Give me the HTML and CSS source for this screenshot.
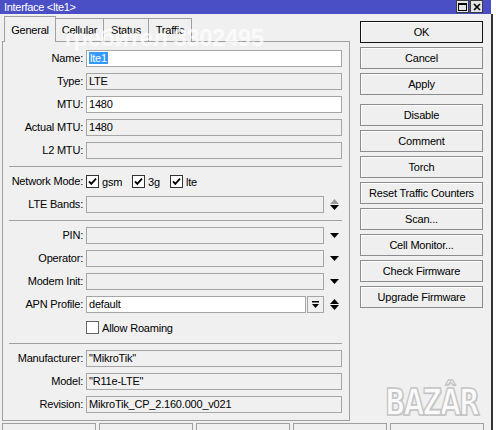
FILE: index.html
```html
<!DOCTYPE html>
<html>
<head>
<meta charset="utf-8">
<link rel="stylesheet" href="styles.css">
</head>
<body>
<div class="window">
  <div class="titlebar">
    <span class="title">Interface &lt;lte1&gt;</span>
    <div class="tb-btns">
      <span class="tb-btn"><svg width="9" height="8" viewBox="0 0 9 8"><rect x="0.5" y="0.5" width="8" height="7" fill="none" stroke="#000"/><rect x="0" y="0" width="9" height="2" fill="#000"/></svg></span>
      <span class="tb-btn"><svg width="8" height="8" viewBox="0 0 8 8"><path d="M1 1L7 7M7 1L1 7" stroke="#000" stroke-width="1.7"/></svg></span>
    </div>
  </div>
  <div class="main">
    <div class="content">
      <div class="left">
        <div class="tabs">
          <div class="tab active">General</div>
          <div class="tab t2">Cellular</div>
          <div class="tab t3">Status</div>
          <div class="tab t4">Traffic</div>
          <div class="watermark">требител 3302495</div>
        </div>
        <div class="panel">
          <div class="row"><div class="lbl">Name:</div><div class="field edit"><span class="sel">lte1</span></div></div>
          <div class="row"><div class="lbl">Type:</div><div class="field">LTE</div></div>
          <div class="row"><div class="lbl">MTU:</div><div class="field edit">1480</div></div>
          <div class="row"><div class="lbl">Actual MTU:</div><div class="field">1480</div></div>
          <div class="row"><div class="lbl">L2 MTU:</div><div class="field"></div></div>
          <div class="sep"></div>
          <div class="row"><div class="lbl">Network Mode:</div>
            <div class="val checks">
              <div class="cbi w46"><span class="cb"><svg width="11" height="11" viewBox="0 0 11 11"><path d="M2 5.3L4.3 7.8L9 2.6" fill="none" stroke="#000" stroke-width="1.8"/></svg></span><span>gsm</span></div>
              <div class="cbi w38"><span class="cb"><svg width="11" height="11" viewBox="0 0 11 11"><path d="M2 5.3L4.3 7.8L9 2.6" fill="none" stroke="#000" stroke-width="1.8"/></svg></span><span>3g</span></div>
              <div class="cbi"><span class="cb"><svg width="11" height="11" viewBox="0 0 11 11"><path d="M2 5.3L4.3 7.8L9 2.6" fill="none" stroke="#000" stroke-width="1.8"/></svg></span><span>lte</span></div>
            </div>
          </div>
          <div class="row"><div class="lbl">LTE Bands:</div>
            <div class="val"><div class="field"></div><div class="extra"><svg width="9" height="11" viewBox="0 0 9 11"><polygon points="0,5 9,5 4.5,0" fill="#9a9a9a"/><polygon points="0,6 9,6 4.5,11" fill="#000"/></svg></div></div>
          </div>
          <div class="sep"></div>
          <div class="row"><div class="lbl">PIN:</div>
            <div class="val"><div class="field"></div><div class="extra"><svg width="9" height="5" viewBox="0 0 9 5"><polygon points="0,0 9,0 4.5,5" fill="#000"/></svg></div></div>
          </div>
          <div class="row"><div class="lbl">Operator:</div>
            <div class="val"><div class="field"></div><div class="extra"><svg width="9" height="5" viewBox="0 0 9 5"><polygon points="0,0 9,0 4.5,5" fill="#000"/></svg></div></div>
          </div>
          <div class="row"><div class="lbl">Modem Init:</div>
            <div class="val"><div class="field"></div><div class="extra"><svg width="9" height="5" viewBox="0 0 9 5"><polygon points="0,0 9,0 4.5,5" fill="#000"/></svg></div></div>
          </div>
          <div class="row"><div class="lbl">APN Profile:</div>
            <div class="val"><div class="field edit">default</div><div class="mini"><svg width="7" height="7" viewBox="0 0 7 7"><rect x="0" y="0" width="7" height="1.5" fill="#000"/><polygon points="0,3 7,3 3.5,7" fill="#000"/></svg></div><div class="extra"><svg width="9" height="11" viewBox="0 0 9 11"><polygon points="0,5 9,5 4.5,0" fill="#000"/><polygon points="0,6 9,6 4.5,11" fill="#000"/></svg></div></div>
          </div>
          <div class="row"><div class="lbl"></div>
            <div class="val checks"><div class="cbi"><span class="cb light"></span><span>Allow Roaming</span></div></div>
          </div>
          <div class="sep"></div>
          <div class="row"><div class="lbl">Manufacturer:</div><div class="field">"MikroTik"</div></div>
          <div class="row"><div class="lbl">Model:</div><div class="field">"R11e-LTE"</div></div>
          <div class="row"><div class="lbl">Revision:</div><div class="field">MikroTik_CP_2.160.000_v021</div></div>
        </div>
      </div>
      <div class="buttons">
        <div class="btn default">OK</div>
        <div class="btn">Cancel</div>
        <div class="btn">Apply</div>
        <div class="btn gap">Disable</div>
        <div class="btn">Comment</div>
        <div class="btn">Torch</div>
        <div class="btn">Reset Traffic Counters</div>
        <div class="btn">Scan...</div>
        <div class="btn">Cell Monitor...</div>
        <div class="btn">Check Firmware</div>
        <div class="btn">Upgrade Firmware</div>
      </div>
    </div>
    <div class="statusbar">
      <div class="sb"></div><div class="sb"></div><div class="sb"></div><div class="sb"></div><div class="sb"></div>
    </div>
  </div>
  <div class="bazar">BAZÂR</div>
</div>
</body>
</html>
```

FILE: styles.css
```css
* { box-sizing: border-box; }
html, body { margin: 0; padding: 0; }
body {
  width: 496px;
  height: 430px;
  overflow: hidden;
  background: #fff;
  font-family: "Liberation Sans", Arial, sans-serif;
  font-size: 11px;
  letter-spacing: -0.2px;
  color: #000;
}
.window { position: relative; width: 493px; height: 430px; }
.titlebar {
  width: 491px;
  height: 14px;
  background: #4b4fc6;
  display: flex;
  justify-content: space-between;
  align-items: flex-start;
  padding: 0 8px 0 4px;
}
.title { color: #fff; line-height: 14px; letter-spacing: -0.3px; }
.tb-btns { display: flex; gap: 1px; }
.tb-btn {
  width: 13px; height: 13px;
  background: #e4e4e4;
  border: 1px solid #3a3a3a;
  display: flex; align-items: center; justify-content: center;
}
.main {
  height: 416px;
  background: #f0f0f0;
  border-right: 2px solid #333;
  overflow: hidden;
}
.content { display: flex; }
.left { width: 348px; margin-left: 2px; position: relative; }
.tabs {
  position: relative;
  height: 27px;
  display: flex;
  align-items: flex-end;
  padding-left: 2px;
}
.tab {
  height: 23px;
  border-top: 1px solid #a0a0a0;
  border-right: 1px solid #a0a0a0;
  padding-top: 5px;
  text-align: center;
  line-height: 13px;
  background: #f0f0f0;
}
.tab.active {
  width: 52px;
  height: 26px;
  margin-bottom: -1px;
  padding-top: 7px;
  border-left: 1px solid #a0a0a0;
  position: relative;
  z-index: 1;
}
.tab.t2 { width: 48px; }
.tab.t3 { width: 45px; }
.tab.t4 { width: 43px; }
.watermark {
  position: absolute;
  left: 60px;
  top: 12px;
  font-weight: bold;
  font-size: 24px;
  line-height: 24px;
  letter-spacing: -0.5px;
  color: rgba(255, 255, 255, 0.72);
  white-space: nowrap;
  z-index: 2;
}
.panel {
  height: 380px;
  border: 1px solid #a0a0a0;
  padding: 8px 7px 7px 0;
  display: flex;
  flex-direction: column;
  gap: 6px;
}
.row {
  display: grid;
  grid-template-columns: 80px 1fr;
  column-gap: 3px;
  height: 17px;
}
.lbl { text-align: right; line-height: 17px; white-space: nowrap; }
.field {
  height: 17px;
  border: 1px solid #a5a5a5;
  background: #f0f0f0;
  padding-left: 2px;
  line-height: 15px;
  white-space: nowrap;
  overflow: hidden;
}
.field.edit { background: #fff; }
.sel { background: #3399ff; color: #fff; padding: 0 1px; }
.val { display: flex; height: 17px; }
.val .field { flex: 1; }
.extra {
  width: 18px;
  display: flex;
  align-items: center;
  padding-left: 6px;
}
.mini {
  width: 17px;
  height: 17px;
  margin-left: 1px;
  border: 1px solid #a5a5a5;
  background: #f0f0f0;
  display: flex; align-items: center; justify-content: center;
}
.sep { height: 1px; background: #a0a0a0; margin: 1px 0 0 6px; }
.checks { align-items: center; }
.cbi { display: flex; align-items: center; gap: 3px; }
.w46 { width: 46px; }
.w38 { width: 38px; }
.cb {
  width: 13px; height: 13px;
  border: 1px solid #333;
  background: #fff;
  display: flex; align-items: center; justify-content: center;
}
.cb.light { border-color: #666; }
.buttons {
  margin-left: 10px;
  width: 123px;
  padding-top: 7px;
  display: flex;
  flex-direction: column;
  gap: 4px;
}
.btn {
  height: 22px;
  border: 1px solid #8c8c8c;
  background: #efefef;
  box-shadow: inset 1px 1px 0 #fff;
  text-align: center;
  line-height: 20px;
  white-space: nowrap;
}
.btn.default { border-color: #111; }
.btn.gap { margin-top: 5px; }
.statusbar {
  display: flex;
  gap: 3px;
  padding-left: 2px;
  margin-top: 2px;
}
.sb { width: 94px; height: 20px; border: 1px solid #a0a0a0; }
.bazar {
  position: absolute;
  left: 385px;
  top: 384px;
  font-family: "DejaVu Sans", sans-serif;
  font-weight: bold;
  font-size: 27px;
  line-height: 27px;
  letter-spacing: -2px;
  color: #fafafa;
  -webkit-text-stroke: 1.2px #c4c4c4;
  text-shadow: 1px 1px 0 #d0d0d0;
  transform: scaleY(1.35);
  transform-origin: top left;
}
```
